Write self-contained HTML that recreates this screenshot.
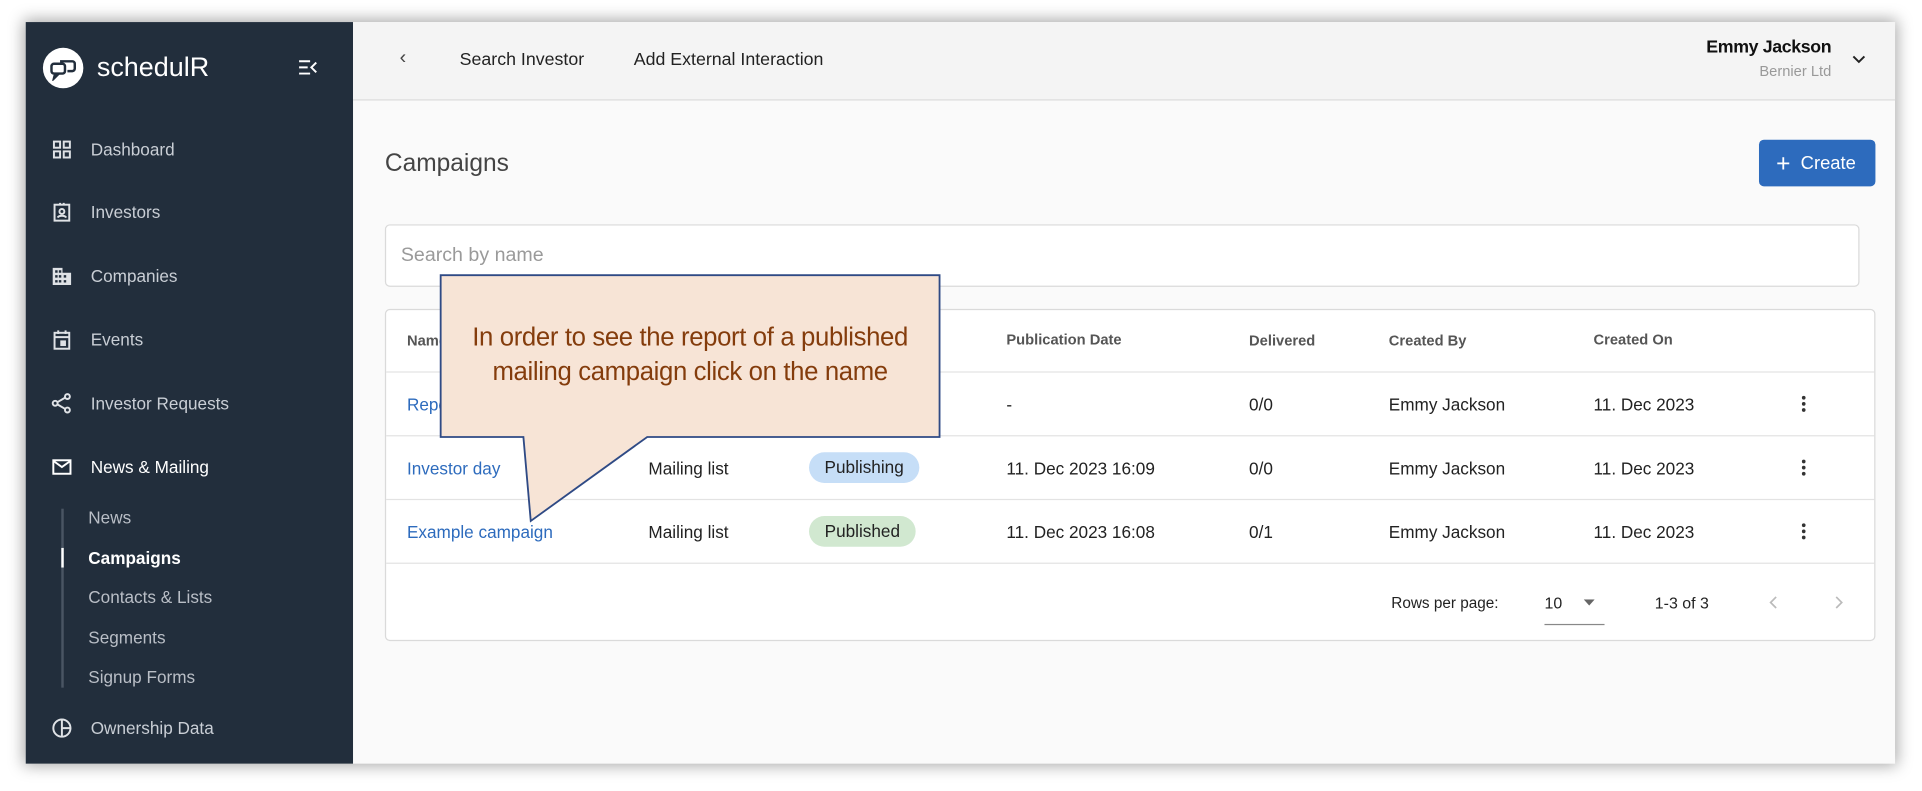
<!DOCTYPE html>
<html><head><meta charset="utf-8"><style>
*{box-sizing:border-box;margin:0;padding:0}
html,body{width:1922px;height:790px;overflow:hidden;background:#fff;font-family:"Liberation Sans",sans-serif}
#w{position:absolute;left:0;top:0;width:1568px;height:645px;transform:scale(1.22577);transform-origin:0 0}
.a{position:absolute;white-space:nowrap}
#frame{position:absolute;left:21px;top:18px;width:1525px;height:605px;background:#fafafa;box-shadow:0 0 12px 2px rgba(0,0,0,.35)}
#side{position:absolute;left:21px;top:18px;width:267px;height:605px;background:#222e3c}
.mi{position:absolute;left:74px;color:#c9ced5;font-size:14px;transform:translateY(-50%)}
.ic{position:absolute;left:42px;width:17px;height:17px;transform:translateY(-50%)}
.si{position:absolute;left:72px;color:#b9bec6;font-size:14px;transform:translateY(-50%)}
.c{transform:translateY(-50%);font-size:14px;color:#222}
.h{transform:translateY(-50%);font-size:12px;color:#555;font-weight:bold}
.l{color:#2d6bbd}
.line{position:absolute;left:315px;width:1214px;height:1px;background:#e3e3e3}
.dots{position:absolute;left:1470px;width:3px}
.dots i{display:block;width:3px;height:3px;border-radius:50%;background:#333;margin-bottom:2px}
</style></head><body><div id="w">
<div id="frame"></div>
<div id="side"></div>
<div class="a" style="left:35px;top:39px;width:33px;height:33px;border-radius:50%;background:#fff"></div>
<svg class="a" style="left:40px;top:45px" width="23" height="21" viewBox="0 0 23 21" fill="none" stroke="#222e3c" stroke-width="2"><rect x="2" y="7" width="11" height="8" rx="2"/><path d="M9 5h10a2 2 0 0 1 2 2v4a2 2 0 0 1-2 2h-4"/><path d="M5 15l-1 4 4-4"/></svg>
<div class="a" style="left:79px;top:42px;font-size:22px;color:#fff">schedulR</div>
<svg class="a" style="left:243px;top:48px" width="16" height="14" viewBox="0 0 16 14" stroke="#fff" stroke-width="1.6" fill="none"><path d="M1 2h9M1 7h7M1 12h9M15 3l-4 4 4 4"/></svg>
<svg class="ic" style="top:122px" viewBox="0 0 17 17" fill="none" stroke="#dfe2e6" stroke-width="1.6"><rect x="2" y="2" width="5" height="5"/><rect x="10" y="2" width="5" height="5"/><rect x="2" y="10" width="5" height="5"/><rect x="10" y="10" width="5" height="5"/></svg>
<div class="mi" style="top:122px">Dashboard</div>
<svg class="ic" style="top:173px" viewBox="0 0 17 17" fill="none" stroke="#dfe2e6" stroke-width="1.6"><rect x="2.5" y="2.5" width="12" height="13"/><circle cx="8.5" cy="8" r="2"/><path d="M5 13c1-2 6-2 7 0M7 1v2M10 1v2"/></svg>
<div class="mi" style="top:173px">Investors</div>
<svg class="ic" style="top:225px" viewBox="0 0 17 17" fill="#dfe2e6"><path d="M1 2h8v4h7v10H1z M3 4v2h2V4z M3 8v2h2V8z M3 12v2h2v-2z M6 4v2h2V4z M6 8v2h2V8z M6 12v2h2v-2z M10 8v2h2V8z M10 12v2h2v-2z" fill-rule="evenodd"/></svg>
<div class="mi" style="top:225px">Companies</div>
<svg class="ic" style="top:277px" viewBox="0 0 17 17" fill="none" stroke="#dfe2e6" stroke-width="1.6"><rect x="2.5" y="3" width="12" height="13"/><path d="M2.5 6.5h12M5.5 1v3M11.5 1v3"/><rect x="8" y="10" width="3" height="3" fill="#dfe2e6"/></svg>
<div class="mi" style="top:277px">Events</div>
<svg class="ic" style="top:329px" viewBox="0 0 17 17" fill="none" stroke="#dfe2e6" stroke-width="1.6"><circle cx="13" cy="3" r="2"/><circle cx="3" cy="8.5" r="2"/><circle cx="13" cy="14" r="2"/><path d="M5 7.5l6-3.5M5 9.5l6 3.5"/></svg>
<div class="mi" style="top:329px">Investor Requests</div>
<svg class="ic" style="top:381px" viewBox="0 0 17 17" fill="none" stroke="#fff" stroke-width="1.6"><rect x="1.5" y="3" width="14" height="11"/><path d="M1.5 3.5l7 5 7-5"/></svg>
<div class="mi" style="top:381px;color:#fff">News &amp; Mailing</div>
<div class="a" style="left:50px;top:415px;width:2px;height:146px;background:#4a5563"></div>
<div class="a" style="left:50px;top:447px;width:2px;height:16px;background:#fff"></div>
<div class="si" style="top:422px">News</div>
<div class="si" style="top:455px;color:#fff;font-weight:bold">Campaigns</div>
<div class="si" style="top:487px">Contacts &amp; Lists</div>
<div class="si" style="top:520px">Segments</div>
<div class="si" style="top:552px">Signup Forms</div>
<svg class="ic" style="top:594px" viewBox="0 0 17 17" fill="none" stroke="#dfe2e6" stroke-width="1.6"><circle cx="8.5" cy="8.5" r="7"/><path d="M8.5 1.5v14M8.5 8.5h7"/></svg>
<div class="mi" style="top:594px">Ownership Data</div>
<div class="a" style="left:288px;top:18px;width:1258px;height:64px;background:#f4f4f4;border-bottom:1px solid #dcdcdc"></div>
<div class="a c" style="left:326px;top:48px;font-size:16px;color:#444">‹</div>
<div class="a c" style="left:375px;top:49px;font-size:14.5px;font-weight:500">Search Investor</div>
<div class="a c" style="left:517px;top:49px;font-size:14.5px">Add External Interaction</div>
<div class="a" style="right:74px;top:31px;font-size:14.5px;color:#111;text-align:right;font-weight:bold;letter-spacing:-0.3px">Emmy Jackson</div>
<div class="a" style="right:74px;top:51px;font-size:12px;color:#999;text-align:right">Bernier Ltd</div>
<svg class="a" style="left:1511px;top:45px" width="11" height="7" viewBox="0 0 11 7" fill="none" stroke="#222" stroke-width="1.6"><path d="M1 1l4.5 4.5L10 1"/></svg>
<div class="a c" style="left:314px;top:134px;font-size:20px;color:#444">Campaigns</div>
<div class="a" style="left:1435px;top:114px;width:95px;height:38px;background:#2d6bbd;border-radius:4px;color:#fff;font-size:15px;line-height:40px;padding-left:14px"><span style="font-size:20px;vertical-align:-2px">+</span>&nbsp; Create</div>
<div class="a" style="left:314px;top:183px;width:1203px;height:51px;background:#fff;border:1px solid #dadada;border-radius:4px"></div>
<div class="a c" style="left:327px;top:209px;font-size:16px;color:#9a9a9a">Search by name</div>
<div class="a" style="left:314px;top:252px;width:1216px;height:271px;background:#fff;border:1px solid #dadada;border-radius:4px"></div>
<div class="a h" style="left:332px;top:278px">Name</div>
<div class="a h" style="left:529px;top:278px">Type</div>
<div class="a h" style="left:660px;top:278px">Status</div>
<div class="a h" style="left:821px;top:277px">Publication Date</div>
<div class="a h" style="left:1019px;top:278px">Delivered</div>
<div class="a h" style="left:1133px;top:278px">Created By</div>
<div class="a h" style="left:1300px;top:277px">Created On</div>
<div class="line" style="top:303px"></div>
<div class="line" style="top:355px"></div>
<div class="line" style="top:407px"></div>
<div class="line" style="top:459px"></div>
<div class="a c l" style="left:332px;top:330px">Report</div>
<div class="a c" style="left:821px;top:330px">-</div>
<div class="a c" style="left:1019px;top:330px">0/0</div>
<div class="a c" style="left:1133px;top:330px">Emmy Jackson</div>
<div class="a c" style="left:1300px;top:330px">11. Dec 2023</div>
<div class="dots" style="top:323px"><i></i><i></i><i></i></div>
<div class="a c l" style="left:332px;top:382px">Investor day</div>
<div class="a c" style="left:529px;top:382px">Mailing list</div>
<div class="a" style="left:660px;top:369px;width:90px;height:25px;border-radius:13px;background:#c6def7;font-size:14px;color:#222;line-height:25px;text-align:center">Publishing</div>
<div class="a c" style="left:821px;top:382px">11. Dec 2023 16:09</div>
<div class="a c" style="left:1019px;top:382px">0/0</div>
<div class="a c" style="left:1133px;top:382px">Emmy Jackson</div>
<div class="a c" style="left:1300px;top:382px">11. Dec 2023</div>
<div class="dots" style="top:375px"><i></i><i></i><i></i></div>
<div class="a c l" style="left:332px;top:434px">Example campaign</div>
<div class="a c" style="left:529px;top:434px">Mailing list</div>
<div class="a" style="left:660px;top:421px;width:87px;height:25px;border-radius:13px;background:#d1e8d0;font-size:14px;color:#222;line-height:25px;text-align:center">Published</div>
<div class="a c" style="left:821px;top:434px">11. Dec 2023 16:08</div>
<div class="a c" style="left:1019px;top:434px">0/1</div>
<div class="a c" style="left:1133px;top:434px">Emmy Jackson</div>
<div class="a c" style="left:1300px;top:434px">11. Dec 2023</div>
<div class="dots" style="top:427px"><i></i><i></i><i></i></div>
<div class="a c" style="left:1135px;top:492px;font-size:12.5px">Rows per page:</div>
<div class="a c" style="left:1260px;top:492px;font-size:13px">10</div>
<svg class="a" style="left:1292px;top:489px" width="9" height="5"><path d="M0 0h9L4.5 5z" fill="#666"/></svg>
<div class="a" style="left:1260px;top:509px;width:49px;height:1px;background:#888"></div>
<div class="a c" style="left:1350px;top:492px;font-size:13px">1-3 of 3</div>
<svg class="a" style="left:1443px;top:486px" width="7" height="11" fill="none" stroke="#bbb" stroke-width="1.4"><path d="M6 1L1.5 5.5 6 10"/></svg>
<svg class="a" style="left:1497px;top:486px" width="7" height="11" fill="none" stroke="#bbb" stroke-width="1.4"><path d="M1 1l4.5 4.5L1 10"/></svg>
<svg class="a" style="left:355px;top:220px" width="420" height="210" viewBox="355 220 420 210"><path d="M359.5 224.5H766.5V356.5H528L433 425L427 356.5H359.5Z" fill="#f7e4d6" stroke="#2f4a85" stroke-width="1.5"/></svg>
<div class="a" style="left:359px;top:262px;width:408px;text-align:center;font-size:21px;line-height:28px;color:#843c0c;letter-spacing:-0.3px">In order to see the report of a published<br>mailing campaign click on the name</div>
</div></body></html>
